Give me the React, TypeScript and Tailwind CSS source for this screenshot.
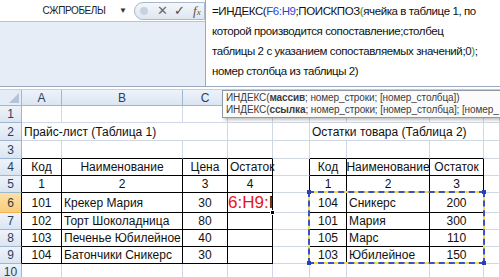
import React from 'react';

const COLS = ['A', 'B', 'C', 'D', 'E', 'F', 'G', 'H', 'I'];
const ROWS = [1, 2, 3, 4, 5, 6, 7, 8, 9, 10];

type Cell = { text: string; align?: 'left' | 'center' | 'right'; span?: number };

const CELLS: Record<string, Cell> = {
  A2: { text: 'Прайс-лист (Таблица 1)', align: 'left', span: 3 },
  F2: { text: 'Остатки товара (Таблица 2)', align: 'left', span: 3 },
  A4: { text: 'Код', align: 'center' },
  B4: { text: 'Наименование', align: 'center' },
  C4: { text: 'Цена', align: 'center' },
  D4: { text: 'Остаток', align: 'left' },
  A5: { text: '1', align: 'center' },
  B5: { text: '2', align: 'center' },
  C5: { text: '3', align: 'center' },
  D5: { text: '4', align: 'center' },
  A6: { text: '101', align: 'center' },
  B6: { text: 'Крекер Мария', align: 'left' },
  C6: { text: '30', align: 'center' },
  A7: { text: '102', align: 'center' },
  B7: { text: 'Торт Шоколадница', align: 'left' },
  C7: { text: '80', align: 'center' },
  A8: { text: '103', align: 'center' },
  B8: { text: 'Печенье Юбилейное', align: 'left' },
  C8: { text: '40', align: 'center' },
  A9: { text: '104', align: 'center' },
  B9: { text: 'Батончики Сникерс', align: 'left' },
  C9: { text: '30', align: 'center' },
  F4: { text: 'Код', align: 'center' },
  G4: { text: 'Наименование', align: 'center' },
  H4: { text: 'Остаток', align: 'center' },
  F5: { text: '1', align: 'center' },
  G5: { text: '2', align: 'center' },
  H5: { text: '3', align: 'center' },
  F6: { text: '104', align: 'center' },
  G6: { text: 'Сникерс', align: 'left' },
  H6: { text: '200', align: 'center' },
  F7: { text: '101', align: 'center' },
  G7: { text: 'Мария', align: 'left' },
  H7: { text: '300', align: 'center' },
  F8: { text: '105', align: 'center' },
  G8: { text: 'Марс', align: 'left' },
  H8: { text: '110', align: 'center' },
  F9: { text: '103', align: 'center' },
  G9: { text: 'Юбилейное', align: 'left' },
  H9: { text: '150', align: 'center' },
};

// ячейки, закрытые текстом строки 2
const HIDDEN = new Set(['B2', 'C2', 'G2', 'H2']);

function inTable(c: number, r: number) {
  if (r < 4 || r > 9) return false;
  return (c >= 0 && c <= 3) || (c >= 5 && c <= 7);
}

const ALIGN = { left: 'justify-start', center: 'justify-center', right: 'justify-end' };

// бегущая рамка копирования F6:H9, привязана к ячейке F6
function CopyMarquee() {
  return (
    <div className="pointer-events-none absolute -left-[2px] -top-[2px] z-10 h-[73px] w-[177px] border-2 border-[#f4e04a]">
      <div className="absolute -inset-[2px] border-2 border-dashed border-[#3a52c8]" />
      <div className="absolute -left-[3px] -top-[3px] h-[4px] w-[4px] bg-[#2c3fb8]" />
      <div className="absolute -right-[3px] -top-[3px] h-[4px] w-[4px] bg-[#2c3fb8]" />
      <div className="absolute -bottom-[3px] -left-[3px] h-[4px] w-[4px] bg-[#2c3fb8]" />
      <div className="absolute -bottom-[3px] -right-[3px] h-[4px] w-[4px] bg-[#2c3fb8]" />
    </div>
  );
}

function FormulaBar() {
  return (
    <div className="flex h-[87px] border-b border-[#9aa9bd]">
      <div className="flex w-[205px] flex-col bg-[#e7edf6]">
        <div className="flex h-[22px] items-center border-b border-[#b7c5d8] bg-white">
          <div className="flex w-[134px] items-center">
            <span className="ml-[31px] w-[86px] text-center text-[10px] tracking-[-0.4px] text-[#222]">СЖПРОБЕЛЫ</span>
            <span className="ml-[2px] text-[8px] text-[#333]">▼</span>
          </div>
          <div className="flex h-[18px] flex-1 items-center rounded-l-full border border-[#a9b8cc] bg-gradient-to-b from-[#f4f7fb] to-[#dfe6f0] pl-[5px]">
            <span className="h-[8px] w-[8px] rounded-full bg-[#c8d2de]" />
            <span className="ml-[9px] text-[13px] leading-none text-[#6a6a6a]">✕</span>
            <span className="ml-[6px] text-[13px] leading-none text-[#4c4c4c]">✓</span>
            <span className="ml-[8px] font-['Liberation_Serif'] text-[13px] italic leading-none text-[#555]">
              f<span className="text-[9px]">x</span>
            </span>
          </div>
        </div>
      </div>
      <div className="flex-1 whitespace-nowrap border-l border-[#9aa9bd] bg-white pl-[6px] pt-[1px] text-[11.5px] leading-[20px] tracking-[-0.4px] text-[#111]">
        <div>
          =ИНДЕКС(<span className="text-[#2346d8]">F6:H9</span>;ПОИСКПОЗ<span className="text-[#1d9a2a]">(</span>ячейка в таблице 1, по
        </div>
        <div>которой производится сопоставление;столбец</div>
        <div>
          таблицы 2 с указанием сопоставляемых значений;0<span className="text-[#1d9a2a]">)</span>;
        </div>
        <div>номер столбца из таблицы 2)</div>
      </div>
    </div>
  );
}

function Sheet() {
  const items: React.ReactNode[] = [];

  items.push(
    <div key="corner" className="relative border-b border-r border-[#9eb6ce] bg-[#e4ecf7]">
      <div className="absolute bottom-[2px] right-[2px] h-0 w-0 border-b-[10px] border-l-[10px] border-b-[#b4c3d6] border-l-transparent" />
    </div>
  );
  COLS.forEach((c) =>
    items.push(
      <div
        key={`h${c}`}
        className="flex items-center justify-center border-b border-r border-[#9eb6ce] bg-gradient-to-b from-[#eef3fa] to-[#dbe5f2] text-[12px] text-[#27415f]"
      >
        {c}
      </div>
    )
  );

  ROWS.forEach((r) => {
    const active = r === 6;
    items.push(
      <div
        key={`r${r}`}
        className={`flex items-center justify-center border-b text-[12px] ${
          active
            ? 'border-[#f2b451] bg-gradient-to-b from-[#fbe1a6] to-[#f7cd7c] text-[#3b3b3b]'
            : 'border-[#9eb6ce] bg-gradient-to-b from-[#eef3fa] to-[#dbe5f2] text-[#27415f]'
        } border-r ${inTable(0, r) ? 'border-r-black' : 'border-r-[#9eb6ce]'}`}
      >
        {r}
      </div>
    );
    COLS.forEach((c, ci) => {
      const key = `${c}${r}`;
      if (HIDDEN.has(key)) return;
      const cell = CELLS[key];
      const span = cell?.span ?? 1;
      const lastCi = ci + span - 1;
      const br = inTable(lastCi, r) || inTable(lastCi + 1, r) ? 'border-r-black' : 'border-r-[#d0d7e5]';
      const bb = inTable(ci, r) || inTable(ci, r + 1) ? 'border-b-black' : 'border-b-[#d0d7e5]';
      if (key === 'D6') {
        items.push(
          <div key={key} className={`relative flex items-center justify-end border-b border-r ${br} ${bb}`}>
            <div className="w-full overflow-hidden whitespace-nowrap pr-[2px] text-right text-[17px] leading-none">
              <span className="text-[#e8141b]">6:H9:</span>
              <span className="text-[#111]">Г</span>
            </div>
            <div className="absolute -bottom-[3px] -right-[3px] z-20 h-[5px] w-[5px] border border-white bg-black" />
          </div>
        );
        return;
      }
      items.push(
        <div
          key={key}
          className={`relative flex items-center whitespace-nowrap border-b border-r px-[2px] text-[12px] text-[#111] ${br} ${bb} ${
            ALIGN[cell?.align ?? 'left']
          } ${span === 3 ? 'col-span-3' : ''}`}
        >
          {cell?.text}
          {key === 'F6' && <CopyMarquee />}
        </div>
      );
    });
  });

  return (
    <div className="relative mt-[2px] grid grid-cols-[22px_40px_121px_45px_45px_37px_37px_83px_54px_1fr] grid-rows-[16px_17px_18px_18px_17px_17px_20px_17px_17px_17px_17px] border-t border-[#c5d0de]">
      {items}
    </div>
  );
}

export default function App() {
  return (
    <div className="relative h-[277px] w-[500px] overflow-hidden bg-white font-['Liberation_Sans',sans-serif]">
      <FormulaBar />
      <Sheet />
      {/* подсказка по аргументам функции */}
      <div className="absolute left-[222px] top-[90px] z-30 w-[300px] whitespace-nowrap border border-[#8f98a6] bg-[#fbfbfc] px-[3px] py-[1px] text-[10px] leading-[12px] tracking-[-0.1px] text-[#3d3d3d] shadow-[2px_2px_3px_rgba(0,0,0,0.25)]">
        <div>
          ИНДЕКС(<b>массив</b>; номер_строки; [номер_столбца])
        </div>
        <div>
          ИНДЕКС(<b>ссылка</b>; номер_строки; [номер_столбца]; [номер_
        </div>
      </div>
    </div>
  );
}
